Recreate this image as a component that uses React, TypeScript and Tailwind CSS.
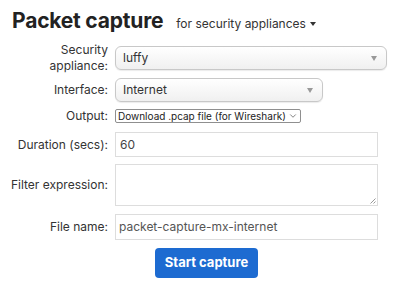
import { ChevronDown } from 'lucide-react';

function FancySelect({ value, width }: { value: string; width: string }) {
    return (
        <div
            className={`${width} h-[24px] flex items-center justify-between pl-[7px] pr-[9px] rounded-[6px] border border-[#c8c8c8] bg-gradient-to-b from-white to-[#f0f0f0] shadow-[0_1px_1px_rgba(0,0,0,0.08)] text-[12px] text-[#333]`}
        >
            <span>{value}</span>
            <span className="inline-block w-0 h-0 border-l-[3px] border-r-[3px] border-t-[5px] border-l-transparent border-r-transparent border-t-[#999]" />
        </div>
    );
}

function Row({ label, children, className }: { label: React.ReactNode; children: React.ReactNode; className?: string }) {
    return (
        <div className={`flex items-center ${className ?? ''}`}>
            <div className="w-[108px] text-right text-[12px] leading-[16px] text-[#333] shrink-0">{label}</div>
            <div className="ml-[7px]">{children}</div>
        </div>
    );
}

export default function App() {
    return (
        <div className="w-[400px] h-[308px] bg-white font-['Inter',sans-serif] pt-[8px]">
            <div className="flex items-baseline pl-[12px] h-[26px]">
                <h1 className="text-[21px] leading-[26px] font-bold text-[#222] tracking-[-0.2px]">Packet capture</h1>
                <span className="ml-[13px] text-[12px] text-[#333] flex items-center">
                    for security appliances
                    <span className="ml-[4px] inline-block w-0 h-0 border-l-[3.5px] border-r-[3.5px] border-t-[4px] border-l-transparent border-r-transparent border-t-[#333]" />
                </span>
            </div>

            <Row label={<>Security<br />appliance:</>} className="mt-[8px] h-[32px]">
                <FancySelect value="luffy" width="w-[272px]" />
            </Row>

            <Row label="Interface:" className="mt-[4px]">
                <FancySelect value="Internet" width="w-[208px]" />
            </Row>

            <Row label="Output:" className="mt-[6px]">
                <div className="w-[186px] h-[14px] flex items-center justify-between pl-[2px] pr-[2px] border border-[#8f8f8f] rounded-[2px] text-[10px] leading-[12px] text-[#222] whitespace-nowrap">
                    <span>Download .pcap file (for Wireshark)</span>
                    <ChevronDown className="w-[10px] h-[10px] text-[#555]" strokeWidth={1.75} />
                </div>
            </Row>

            <Row label="Duration (secs):" className="mt-[8px]">
                <div className="w-[263px] h-[25px] flex items-center pl-[4px] border border-[#ddd] text-[12px] text-[#444]">60</div>
            </Row>

            <Row label="Filter expression:" className="mt-[7px]">
                <div className="relative w-[263px] h-[42px] border border-[#ddd]">
                    <svg className="absolute right-[1px] bottom-[1px]" width="7" height="7" viewBox="0 0 7 7">
                        <path d="M6.5 1.5L1.5 6.5M6.5 4.5L4.5 6.5" stroke="#999" strokeWidth="1" />
                    </svg>
                </div>
            </Row>

            <Row label="File name:" className="mt-[8px]">
                <div className="w-[263px] h-[26px] flex items-center pl-[3px] border border-[#ddd] text-[12px] text-[#555]">packet-capture-mx-internet</div>
            </Row>

            <div className="flex mt-[8px] pl-[155px]">
                <button className="w-[103px] h-[30px] rounded-[4px] bg-[#1d6bd1] text-white text-[13px] font-bold">Start capture</button>
            </div>
        </div>
    );
}
